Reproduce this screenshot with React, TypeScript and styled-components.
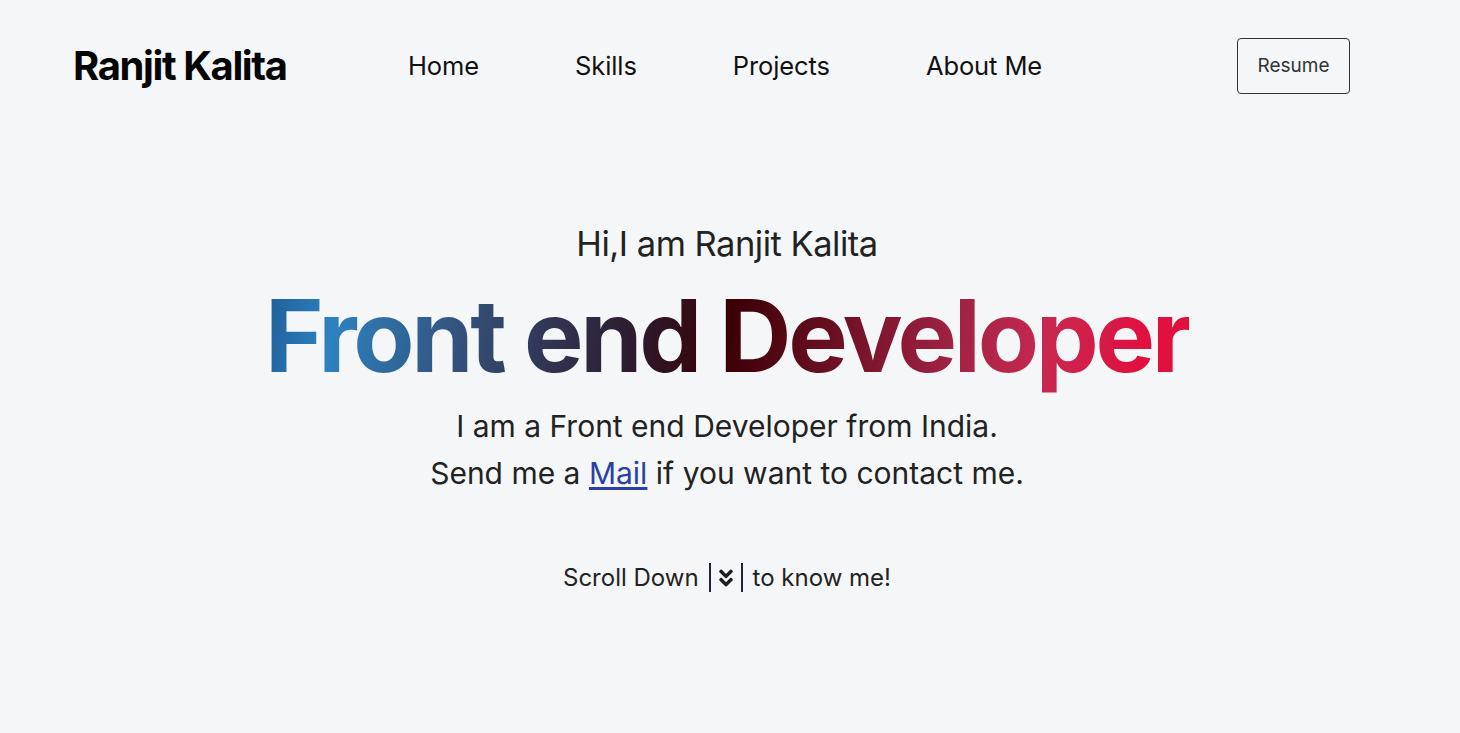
import React from "react";
import styled, { createGlobalStyle } from "styled-components";
import { FaAngleDoubleDown } from "react-icons/fa";

const Global = createGlobalStyle`
  html, body { margin: 0; padding: 0; background: #f5f6f8; }
  body { font-family: Inter, "Noto Sans", sans-serif; color: #1c1c22; }
`;

const Page = styled.div`
  min-height: 733px;
  background: #f5f6f8;
`;

const Header = styled.header`
  display: flex;
  align-items: center;
  height: 131px;
  padding: 0 110px 0 73px;
`;

const Logo = styled.div`
  font-size: 40px;
  font-weight: 700;
  letter-spacing: -1.4px;
  color: #050505;
  width: 335px;
`;

const Nav = styled.nav`
  display: flex;
  gap: 96px;
  flex: 1;
`;

const NavLink = styled.a`
  font-size: 25.5px;
  letter-spacing: -0.1px;
  color: #111;
  text-decoration: none;
`;

const ResumeButton = styled.button`
  width: 113px;
  height: 56px;
  border: 1px solid #333;
  border-radius: 4px;
  background: transparent;
  font-family: Inter, sans-serif;
  font-size: 19px;
  color: #333;
  padding-bottom: 2px;
`;

const Hero = styled.section`
  display: flex;
  flex-direction: column;
  align-items: center;
  padding: 91px 6px 0 0;
`;

const Greeting = styled.div`
  font-size: 34.5px;
  letter-spacing: -0.5px;
  color: #222;
  line-height: 44px;
  margin-bottom: 10px;
`;

const Title = styled.h1`
  margin: 0;
  font-size: 100px;
  font-weight: 700;
  letter-spacing: -3.3px;
  line-height: 120px;
  background: linear-gradient(100deg, #1f5c98 0%, #2c82bf 8%, #34507a 22%, #2c1c2e 40%, #3a0006 50%, #6e1025 62%, #a02244 74%, #c8284f 84%, #e0103f 94%, #e20f3d 100%);
  -webkit-background-clip: text;
  background-clip: text;
  color: transparent;
`;

const Sub = styled.p`
  margin: 7px 0 0;
  font-size: 30px;
  line-height: 47px;
  text-align: center;
  color: #222;
`;

const MailLink = styled.a`
  color: #2b3fa8;
  text-decoration: underline;
  text-underline-offset: 3px;
`;

const Scroll = styled.div`
  margin-top: 66px;
  display: flex;
  align-items: center;
  font-size: 24px;
  color: #222;
`;

const Bar = styled.span<{ $l?: number; $r?: number }>`
  display: inline-block;
  width: 2px;
  height: 29px;
  background: #1e2633;
  margin: 0 ${(p) => p.$r ?? 0}px 0 ${(p) => p.$l ?? 0}px;
`;

const Icon = styled(FaAngleDoubleDown)`
  width: 18px;
  height: 22px;
  color: #1c1c22;
`;

export default function App() {
  return (
    <Page>
      <Global />
      <Header>
        <Logo>Ranjit Kalita</Logo>
        <Nav>
          <NavLink>Home</NavLink>
          <NavLink>Skills</NavLink>
          <NavLink>Projects</NavLink>
          <NavLink>About Me</NavLink>
        </Nav>
        <ResumeButton>Resume</ResumeButton>
      </Header>
      <Hero>
        <Greeting>Hi,I am Ranjit Kalita</Greeting>
        <Title>Front end Developer</Title>
        <Sub>
          I am a Front end Developer from India.
          <br />
          Send me a <MailLink href="#">Mail</MailLink> if you want to contact me.
        </Sub>
        <Scroll>
          Scroll Down
          <Bar $l={10} $r={6} />
          <Icon />
          <Bar $l={6} $r={10} />
          to know me!
        </Scroll>
      </Hero>
    </Page>
  );
}
